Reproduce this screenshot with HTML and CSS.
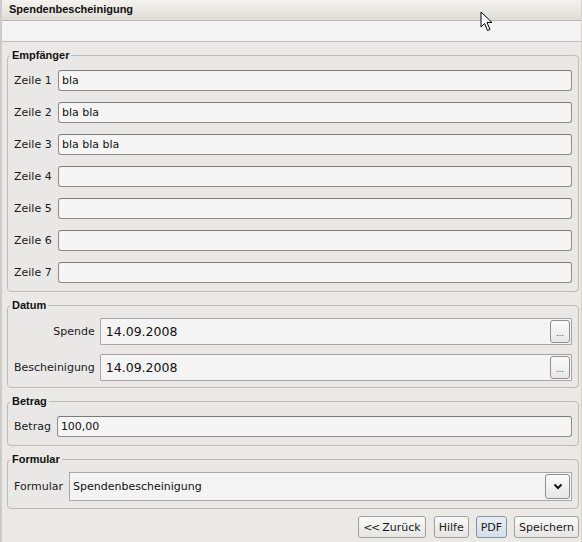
FILE: index.html
```html
<!DOCTYPE html>
<html lang="de">
<head>
<meta charset="utf-8">
<title>Spendenbescheinigung</title>
<link rel="stylesheet" href="styles.css">
</head>
<body>
<div class="window">
  <div class="titlebar">Spendenbescheinigung</div>
  <div class="band"></div>
  <div class="content">
    <fieldset class="group">
      <legend>Empfänger</legend>
      <div class="grid-zeilen">
        <label>Zeile 1</label><input class="field" type="text" value="bla">
        <label>Zeile 2</label><input class="field" type="text" value="bla bla">
        <label>Zeile 3</label><input class="field" type="text" value="bla bla bla">
        <label>Zeile 4</label><input class="field" type="text" value="">
        <label>Zeile 5</label><input class="field" type="text" value="">
        <label>Zeile 6</label><input class="field" type="text" value="">
        <label>Zeile 7</label><input class="field" type="text" value="">
      </div>
    </fieldset>

    <fieldset class="group group-datum">
      <legend>Datum</legend>
      <div class="grid-datum">
        <label class="right">Spende</label>
        <div class="datebox"><span class="datetext">14.09.2008</span><button class="dots" type="button">...</button></div>
        <label class="right">Bescheinigung</label>
        <div class="datebox"><span class="datetext">14.09.2008</span><button class="dots" type="button">...</button></div>
      </div>
    </fieldset>

    <fieldset class="group group-betrag">
      <legend>Betrag</legend>
      <div class="row">
        <label>Betrag</label><input class="field" type="text" value="100,00">
      </div>
    </fieldset>

    <fieldset class="group group-formular">
      <legend>Formular</legend>
      <div class="row">
        <label>Formular</label>
        <div class="combo"><span class="combotext">Spendenbescheinigung</span>
          <button class="chev" type="button"><svg width="10" height="7" viewBox="0 0 10 7"><path d="M1.5 1.5 L5 5 L8.5 1.5" fill="none" stroke="#111" stroke-width="2"/></svg></button>
        </div>
      </div>
    </fieldset>

    <div class="buttons">
      <button class="btn btn-back" type="button"><span class="arrows">&lt;&lt;</span> Zurück</button>
      <button class="btn" type="button">Hilfe</button>
      <button class="btn btn-active" type="button">PDF</button>
      <button class="btn" type="button">Speichern</button>
    </div>
  </div>

  <svg class="cursor" width="14" height="21" viewBox="0 0 14 21">
    <path d="M1 1 L1 16 L4.5 12.5 L7.5 19.5 L10 18.5 L7 11.5 L12 11.5 Z" fill="#fff" stroke="#000" stroke-width="1" stroke-linejoin="miter"/>
  </svg>
</div>
</body>
</html>
```

FILE: styles.css
```css
html, body {
  margin: 0;
  padding: 0;
  background: #ebe9e6;
}

body {
  font-family: "DejaVu Sans", sans-serif;
  font-size: 11px;
  color: #1a1a1a;
}

.window {
  position: relative;
  width: 582px;
  height: 542px;
  box-sizing: border-box;
  border-left: 2px solid #cdcbc6;
  border-right: 1px solid #d6d4cf;
  background: #ebe9e6;
  overflow: hidden;
}

.titlebar {
  height: 20px;
  line-height: 19px;
  padding-left: 7px;
  font-family: "Liberation Sans", Arial, sans-serif;
  font-weight: bold;
  font-size: 11px;
  color: #111;
  background: linear-gradient(#f3f2ee, #dfddd6);
  border-bottom: 1px solid #b9b7b1;
}

.band {
  height: 20px;
  background: #f4f4f6;
  border-bottom: 1px solid #bebebe;
}

.content {
  padding: 0 2px 0 5px;
}

.group {
  margin: 6px 0 0;
  padding: 8px 6px 8px 6px;
  border: 1px solid #bfbcb6;
  border-radius: 4px;
  background: #e9e8e6;
  min-width: 0;
}

.group legend {
  margin-left: -4px;
  padding: 0 2px;
  font-family: "Liberation Sans", Arial, sans-serif;
  font-weight: bold;
  font-size: 11px;
  line-height: 14px;
  color: #111;
}

.group-datum {
  padding-top: 6px;
  padding-bottom: 6px;
}

.group-formular {
  padding-top: 6px;
  padding-bottom: 7px;
}

label {
  white-space: nowrap;
  color: #1a1a1a;
}

.grid-zeilen {
  display: grid;
  grid-template-columns: 44px 1fr;
  row-gap: 11px;
  align-items: center;
}

.field {
  display: block;
  box-sizing: border-box;
  width: 100%;
  height: 21px;
  margin: 0;
  padding: 0 3px;
  font-family: "DejaVu Sans", sans-serif;
  font-size: 11px;
  color: #111;
  background: #f5f5f5;
  border: 1px solid #8f8d89;
  border-top-color: #7c7a76;
  border-radius: 3px;
  outline: none;
}

.grid-datum {
  display: grid;
  grid-template-columns: auto 1fr;
  column-gap: 5px;
  row-gap: 9px;
  align-items: center;
}

.right {
  text-align: right;
}

.datebox {
  display: flex;
  align-items: center;
  justify-content: space-between;
  box-sizing: border-box;
  height: 27px;
  padding: 0 1px 0 5px;
  background: #f4f4f4;
  border: 1px solid #a6a5a2;
  border-radius: 1px;
}

.datetext {
  font-family: "DejaVu Sans", sans-serif;
  font-size: 12.5px;
  color: #111;
}

.dots {
  box-sizing: border-box;
  width: 20px;
  height: 23px;
  margin: 0;
  padding: 5px 0 0;
  font-family: "DejaVu Sans", sans-serif;
  font-size: 8px;
  line-height: 10px;
  color: #333;
  background: linear-gradient(#fbfbfb, #e7e7e7);
  border: 1px solid #8e8e8e;
  border-radius: 3px;
}

.row {
  display: flex;
  align-items: center;
  gap: 6px;
}

.row .field {
  flex: 1;
}

.combo {
  flex: 1;
  display: flex;
  align-items: center;
  justify-content: space-between;
  box-sizing: border-box;
  height: 29px;
  padding: 0 1px 0 3px;
  background: #f4f4f4;
  border: 1px solid #a9a8a5;
}

.combotext {
  font-size: 11px;
  color: #111;
}

.chev {
  display: flex;
  align-items: center;
  justify-content: center;
  box-sizing: border-box;
  width: 25px;
  height: 25px;
  margin: 0;
  padding: 0;
  background: linear-gradient(#fbfbfb, #e6e6e6);
  border: 1px solid #8e8e8e;
  border-radius: 3px;
}

.buttons {
  display: flex;
  justify-content: flex-end;
  gap: 7px;
  margin-top: 7px;
}

.btn {
  box-sizing: border-box;
  height: 22px;
  margin: 0;
  padding: 0 4px;
  font-family: "DejaVu Sans", sans-serif;
  font-size: 11px;
  color: #1a1a1a;
  background: linear-gradient(#fafafa, #e6e5e3);
  border: 1px solid #a2a09c;
  border-radius: 3px;
}

.btn-back {
  margin-right: 1px;
}

.arrows {
  letter-spacing: -1.5px;
}

.btn-active {
  background: linear-gradient(#e9eef5, #d5dde8);
  border-color: #8393aa;
}

.cursor {
  position: absolute;
  left: 478px;
  top: 11px;
}
```
